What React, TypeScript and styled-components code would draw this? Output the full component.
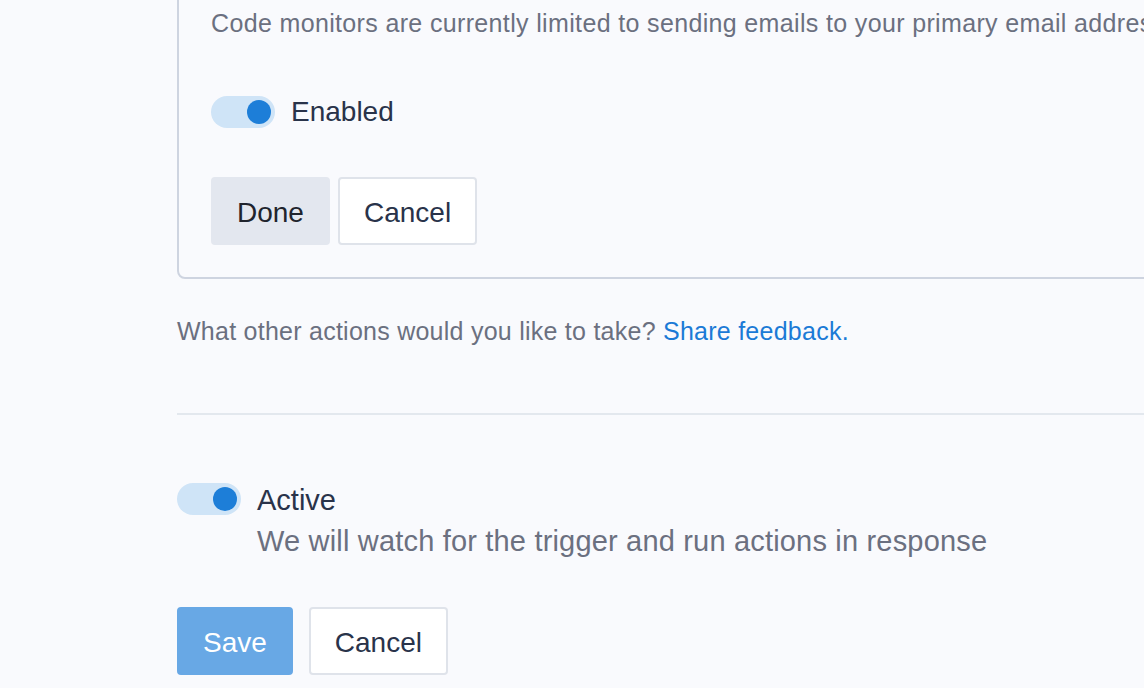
import React from 'react';
import styled, { createGlobalStyle } from 'styled-components';

const GlobalStyle = createGlobalStyle`
  html, body {
    margin: 0;
    padding: 0;
    background: #f9fafd;
    overflow: hidden;
  }
  body {
    font-family: 'Liberation Sans', Arial, sans-serif;
    color: #29334a;
  }
`;

// the page is scrolled, so the card's top edge sits above the window
const Page = styled.div`
  margin-top: -37px;
  padding-left: 177px;
  width: 1200px;
`;

const Card = styled.div`
  border: 2px solid #ced4e0;
  border-radius: 8px;
  padding: 40px 32px 32px 32px;
  background: #f9fafd;
`;

const Note = styled.p`
  margin: 0;
  font-size: 25px;
  line-height: 36px;
  letter-spacing: 0.35px;
  color: #6b7080;
  white-space: nowrap;
`;

const ToggleRow = styled.div<{ mt: number }>`
  display: flex;
  align-items: flex-start;
  gap: 16px;
  margin-top: ${p => p.mt}px;
`;

const Track = styled.span`
  position: relative;
  flex: none;
  width: 64px;
  height: 32px;
  border-radius: 16px;
  background: #cfe4f7;
`;

const Knob = styled.span`
  position: absolute;
  top: 4px;
  right: 4px;
  width: 24px;
  height: 24px;
  border-radius: 50%;
  background: #1d7ed8;
`;

const ToggleLabel = styled.div<{ size: number }>`
  font-size: ${p => p.size}px;
  line-height: 31px;
  color: #29334a;
`;

const LabelColumn = styled.div`
  display: flex;
  flex-direction: column;
  padding-top: 2px;
`;

const Description = styled.div`
  margin-top: 7px;
  font-size: 29px;
  line-height: 36px;
  letter-spacing: 0.18px;
  color: #6b7080;
`;

const ButtonRow = styled.div<{ mt: number; gap: number }>`
  display: flex;
  gap: ${p => p.gap}px;
  margin-top: ${p => p.mt}px;
`;

const Button = styled.button<{ variant: 'secondary' | 'outline' | 'primary' }>`
  height: 68px;
  padding: 3px 24px 0 24px;
  border-radius: 4px;
  font-family: 'Liberation Sans', Arial, sans-serif;
  font-size: 28px;
  cursor: pointer;
  border: 2px solid
    ${p => (p.variant === 'secondary' ? '#e3e7ef' : p.variant === 'primary' ? '#68a8e5' : '#dfe3ea')};
  background: ${p => (p.variant === 'secondary' ? '#e3e7ef' : p.variant === 'primary' ? '#68a8e5' : '#ffffff')};
  color: ${p => (p.variant === 'primary' ? '#ffffff' : p.variant === 'secondary' ? '#20242d' : '#29334a')};
`;

const Feedback = styled.p`
  margin: 34px 0 0 0;
  font-size: 25px;
  line-height: 36px;
  letter-spacing: 0.25px;
  color: #6b7080;
`;

const Link = styled.a`
  color: #1b7ad6;
  text-decoration: none;
`;

const Divider = styled.hr`
  margin: 64px 0 0 0;
  border: none;
  border-top: 2px solid #e3e8ee;
`;

const Toggle: React.FC = () => (
  <Track>
    <Knob />
  </Track>
);

export default function App() {
  return (
    <>
      <GlobalStyle />
      <Page>
        <Card>
          <Note>Code monitors are currently limited to sending emails to your primary email address.</Note>
          <ToggleRow mt={55}>
            <Toggle />
            <ToggleLabel size={28}>Enabled</ToggleLabel>
          </ToggleRow>
          <ButtonRow mt={49} gap={8}>
            <Button variant="secondary">Done</Button>
            <Button variant="outline">Cancel</Button>
          </ButtonRow>
        </Card>

        <Feedback>
          What other actions would you like to take? <Link href="#">Share feedback.</Link>
        </Feedback>

        <Divider />

        <ToggleRow mt={68}>
          <Toggle />
          <LabelColumn>
            <ToggleLabel size={29}>Active</ToggleLabel>
            <Description>We will watch for the trigger and run actions in response</Description>
          </LabelColumn>
        </ToggleRow>

        <ButtonRow mt={48} gap={16}>
          <Button variant="primary">Save</Button>
          <Button variant="outline">Cancel</Button>
        </ButtonRow>
      </Page>
    </>
  );
}
